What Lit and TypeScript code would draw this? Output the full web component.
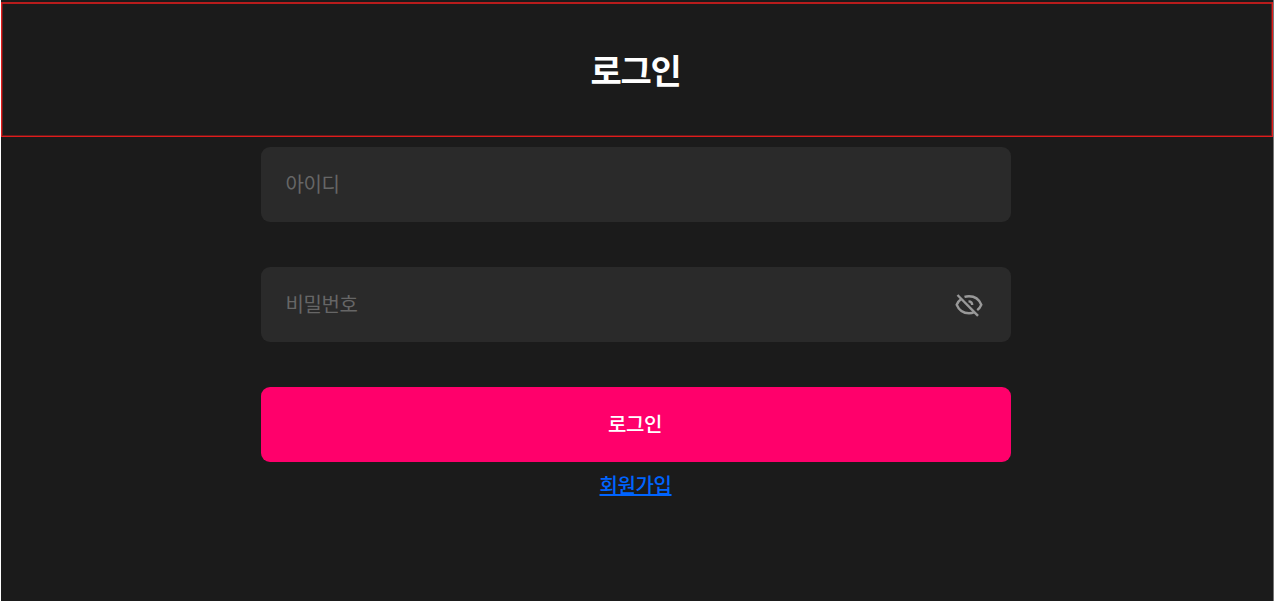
import { LitElement, html, css } from "lit";
import { customElement, property } from "lit/decorators.js";

@customElement("login-field")
export class LoginField extends LitElement {
    static styles = css`
    :host {
        display: flex;
        align-items: center;
        box-sizing: border-box;
        height: 75px;
        padding: 0 27px 0 24.5px;
        border-radius: 9px;
        background: #2a2a2a;
    }

    input {
        flex: 1;
        min-width: 0;
        padding: 0 0 2px;
        border: none;
        outline: none;
        background: none;
        color: #fff;
        font: inherit;
        letter-spacing: inherit;
    }

    input::placeholder { color: #666; }
  `;

    @property() type = "text";
    @property() label = "";

    render() {
        return html`
        <input type=${this.type} placeholder=${this.label} aria-label=${this.label}>
        <slot></slot>
        `;
    }
}

@customElement("app-root")
export class AppRoot extends LitElement {
    static styles = css`
    :host {
        display: block;
        box-sizing: border-box;
        height: 100vh;
        padding-top: 2px;
        overflow: hidden;
        border-left: 1px solid #fff;
        border-right: 1px solid #777;
        background: #1b1b1b;
        color: #fff;
        font-family: "Noto Sans CJK KR", sans-serif;
        font-size: 20px;
        letter-spacing: -0.4px;
    }

    header {
        display: flex;
        align-items: center;
        justify-content: center;
        box-sizing: border-box;
        height: 135px;
        padding: 1px 3px 0 0;
        border: 1px solid #e01b1b;
        border-top-color: #b81c1c;
        box-shadow: inset 0 1px #b81c1c, inset 0 0 0 1px #6b1c1c;
    }

    h1 {
        margin: 0;
        font-size: 34px;
        font-weight: 700;
        line-height: 54px;
        letter-spacing: -1.3px;
    }

    form {
        display: flex;
        flex-direction: column;
        gap: 45px;
        width: 750px;
        margin: 10px 262px 0 260px;
    }

    .toggle {
        display: flex;
        padding: 0;
        border: none;
        background: none;
        color: #999;
    }

    .submit {
        height: 75px;
        padding: 0 2px 2px 0;
        border: none;
        border-radius: 9px;
        background: #ff006b;
        color: #fff;
        font: inherit;
        font-weight: 500;
        letter-spacing: inherit;
    }

    .join {
        display: block;
        width: fit-content;
        margin: 7px auto 0;
        transform: translateX(-1.5px);
        color: #0064ff;
        font-weight: 500;
        line-height: 31px;
        text-decoration-thickness: 2px;
    }
  `;

    render() {
        return html`
        <header><h1>로그인</h1></header>
        <form>
            <login-field label="아이디"></login-field>
            <login-field type="password" label="비밀번호">
                <button class="toggle" type="button" aria-label="비밀번호">
                    <svg width="30" height="30" viewBox="0 0 30 30" fill="none" stroke="currentColor" stroke-width="2.4">
                        <path d="M10.5 6.900C12 6.400 13.500 6.200 15 6.200c6 0 10.300 3.400 12.300 8.500-.9 2.200-2.200 4-4.100 5.400"/>
                        <path d="M7.500 8.700C5.300 10.200 3.700 12.300 2.700 14.700c2 4.900 6.300 8.500 12.300 8.500 2 0 3.800-.4 5.400-1.100"/>
                        <path d="M14.500 11.400c2.200 0 3.700 1.500 3.700 3.700"/>
                        <path d="M3.500 5l20.500 20.800"/>
                    </svg>
                </button>
            </login-field>
            <button class="submit" type="button">로그인</button>
        </form>
        <a class="join" href="#">회원가입</a>
        `;
    }
}
